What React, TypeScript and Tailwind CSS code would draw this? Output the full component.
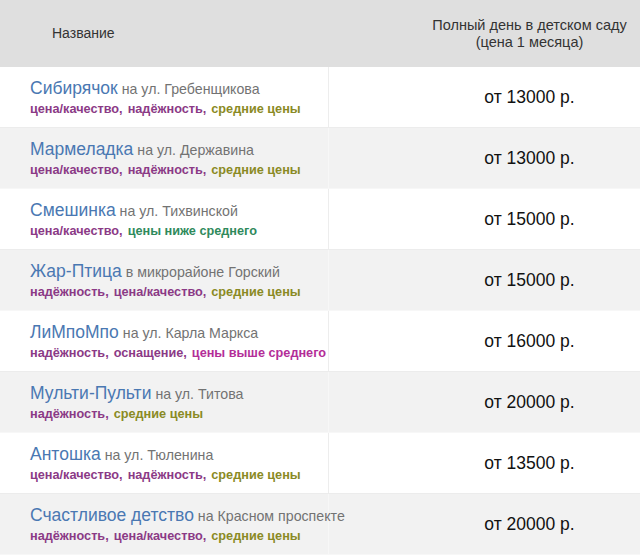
const PURPLE = 'text-[#8b3a86]'
const OLIVE = 'text-[#8a8a24]'
const GREEN = 'text-[#2f8a5c]'
const MAGENTA = 'text-[#b32d98]'

type Tag = { label: string; color: string }

const q: Tag = { label: 'цена/качество', color: PURPLE }
const r: Tag = { label: 'надёжность', color: PURPLE }
const mid: Tag = { label: 'средние цены', color: OLIVE }

const rows: { name: string; addr: string; tags: Tag[]; price: string }[] = [
  { name: 'Сибирячок', addr: 'на ул. Гребенщикова', tags: [q, r, mid], price: 'от 13000 р.' },
  { name: 'Мармеладка', addr: 'на ул. Державина', tags: [q, r, mid], price: 'от 13000 р.' },
  {
    name: 'Смешинка',
    addr: 'на ул. Тихвинской',
    tags: [q, { label: 'цены ниже среднего', color: GREEN }],
    price: 'от 15000 р.',
  },
  { name: 'Жар-Птица', addr: 'в микрорайоне Горский', tags: [r, q, mid], price: 'от 15000 р.' },
  {
    name: 'ЛиМпоМпо',
    addr: 'на ул. Карла Маркса',
    tags: [r, { label: 'оснащение', color: PURPLE }, { label: 'цены выше среднего', color: MAGENTA }],
    price: 'от 16000 р.',
  },
  { name: 'Мульти-Пульти', addr: 'на ул. Титова', tags: [r, mid], price: 'от 20000 р.' },
  { name: 'Антошка', addr: 'на ул. Тюленина', tags: [q, r, mid], price: 'от 13500 р.' },
  { name: 'Счастливое детство', addr: 'на Красном проспекте', tags: [r, q, mid], price: 'от 20000 р.' },
]

export default function App() {
  return (
    <div className="w-[640px] h-[556px] overflow-hidden bg-white font-['Liberation_Sans',Arial,sans-serif]">
      <div className="w-[730px]">
        <div className="flex h-[67px] bg-[#dfdfdf] text-[14px] text-[#333]">
          <div className="w-[329px] flex items-center pl-[52px]">Название</div>
          <div className="flex-1 flex items-center justify-center text-center text-[14.5px] leading-[17px]">
            Полный день в детском саду
            <br />
            (цена 1 месяца)
          </div>
        </div>
        {rows.map((row, i) => {
          const gray = i % 2 === 1
          return (
            <div
              key={row.name}
              className={`flex h-[61px] border-b ${gray ? 'bg-[#f2f2f2] border-[#f7f7f7]' : 'bg-white border-[#ececec]'}`}
            >
              <div
                className={`w-[329px] pl-[30px] pt-[10px] border-r ${gray ? 'border-[#f7f7f7]' : 'border-[#ededed]'}`}
              >
                <div className="leading-[22px] whitespace-nowrap">
                  <span className="text-[17.5px] text-[#4a78b2]">{row.name}</span>
                  <span className="text-[14.2px] text-[#737373]"> {row.addr}</span>
                </div>
                <div className="text-[12.7px] font-bold leading-[18px] whitespace-nowrap">
                  {row.tags.map((t, j) => (
                    <span key={t.label} className={t.color}>
                      {t.label}
                      {j < row.tags.length - 1 ? <span className="text-[#8b3a86] mr-[5px]">,</span> : null}
                    </span>
                  ))}
                </div>
              </div>
              <div className="flex-1 flex items-center justify-center text-[17.5px] text-[#111]">{row.price}</div>
            </div>
          )
        })}
      </div>
    </div>
  )
}
